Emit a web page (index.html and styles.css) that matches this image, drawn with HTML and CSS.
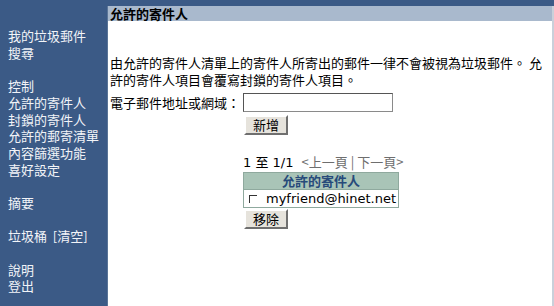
FILE: index.html
```html
<!DOCTYPE html>
<html lang="zh-Hant">
<head>
    <meta charset="UTF-8">
    <title>允許的寄件人</title>
    <link rel="stylesheet" href="styles.css">
</head>
<body>
    <div class="page">
        <div class="sidebar">
            <div class="nav-group">
                <div>我的垃圾郵件</div>
                <div>搜尋</div>
            </div>
            <div class="nav-group">
                <div>控制</div>
                <div>允許的寄件人</div>
                <div>封鎖的寄件人</div>
                <div>允許的郵寄清單</div>
                <div>內容篩選功能</div>
                <div>喜好設定</div>
            </div>
            <div class="nav-group">
                <div>摘要</div>
            </div>
            <div class="nav-group">
                <div>垃圾桶 &nbsp;[清空]</div>
            </div>
            <div class="nav-group">
                <div>說明</div>
                <div>登出</div>
            </div>
        </div>

        <div class="main">
            <div class="title-bar">允許的寄件人</div>

            <p class="intro">由允許的寄件人清單上的寄件人所寄出的郵件一律不會被視為垃圾郵件。 允許的寄件人項目會覆寫封鎖的寄件人項目。</p>

            <div class="form-row">
                <label class="field-label" for="address">電子郵件地址或網域：</label>
                <div class="field">
                    <input type="text" id="address" class="text-input">
                    <button class="btn">新增</button>
                </div>
            </div>

            <div class="list-block">
                <div class="pager">1 至 1/1 <span class="pager-links">&lt;上一頁 | 下一頁&gt;</span></div>
                <table class="sender-table">
                    <tr><th>允許的寄件人</th></tr>
                    <tr><td><span class="check"></span>myfriend@hinet.net</td></tr>
                </table>
                <button class="btn">移除</button>
            </div>
        </div>
    </div>
</body>
</html>
```

FILE: styles.css
```css
body {
    margin: 0;
    font-family: "DejaVu Sans", "Noto Sans CJK TC", sans-serif;
    font-size: 13px;
    background-color: #ffffff;
    color: #000000;
}

.page {
    display: flex;
    min-height: 306px;
    border-top: 6px solid #3b5a86;
}

.sidebar {
    width: 99px;
    background-color: #3b5a86;
    color: #f2f4f8;
    padding: 22px 0 0 8px;
    border-right: 1px solid #5a7598;
    font-family: "Noto Sans CJK TC", sans-serif;
    line-height: 16.7px;
}

.nav-group {
    margin-bottom: 16.7px;
}

.main {
    flex: 1;
    border-right: 2px solid #c9d0da;
}

.title-bar {
    background-color: #a9b9cd;
    font-family: "Noto Sans CJK TC", sans-serif;
    font-weight: bold;
    height: 15px;
    line-height: 15px;
    padding-left: 2px;
}

.intro {
    margin: 33px 0 0 2px;
    line-height: 17px;
    font-family: "Noto Sans CJK TC", sans-serif;
}

.form-row {
    display: flex;
    margin: 5px 0 0 2px;
}

.field-label {
    font-family: "Noto Sans CJK TC", sans-serif;
    width: 133px;
}

.field {
    display: flex;
    flex-direction: column;
    align-items: flex-start;
    gap: 3px;
}

.text-input {
    width: 144px;
    height: 15px;
    padding: 1px 2px;
    border: 1px solid #8a8a8a;
    border-top-color: #555555;
    border-left-color: #555555;
    margin: 0;
}

.btn {
    font-family: "Noto Sans CJK TC", sans-serif;
    font-size: 13px;
    background-color: #e6e3dc;
    border: 2px solid;
    border-color: #ffffff #6f6f6f #6f6f6f #ffffff;
    padding: 0 7px;
    height: 20px;
    line-height: 16px;
    margin: 0 0 0 1px;
}

.list-block {
    margin: 18px 0 0 135px;
}

.pager {
    line-height: 18px;
}

.pager-links {
    color: #6e6e6e;
    font-family: "Noto Sans CJK TC", sans-serif;
    margin-left: 4px;
}

.sender-table {
    border-collapse: collapse;
    border: 1px solid #8fa99e;
    width: 154px;
}

.sender-table th {
    background-color: #a9c4b7;
    color: #274a7a;
    font-family: "Noto Sans CJK TC", sans-serif;
    font-weight: bold;
    height: 16px;
    padding: 0;
    line-height: 16px;
}

.sender-table td {
    padding: 0 2px;
    height: 17px;
    line-height: 17px;
    white-space: nowrap;
    border-top: 1px solid #8fa99e;
}

.check {
    display: inline-block;
    width: 7px;
    height: 7px;
    border-top: 1px solid #333333;
    border-left: 1px solid #333333;
    margin: 0 9px 0 3px;
}

.list-block .btn {
    margin-top: 1px;
}
```
